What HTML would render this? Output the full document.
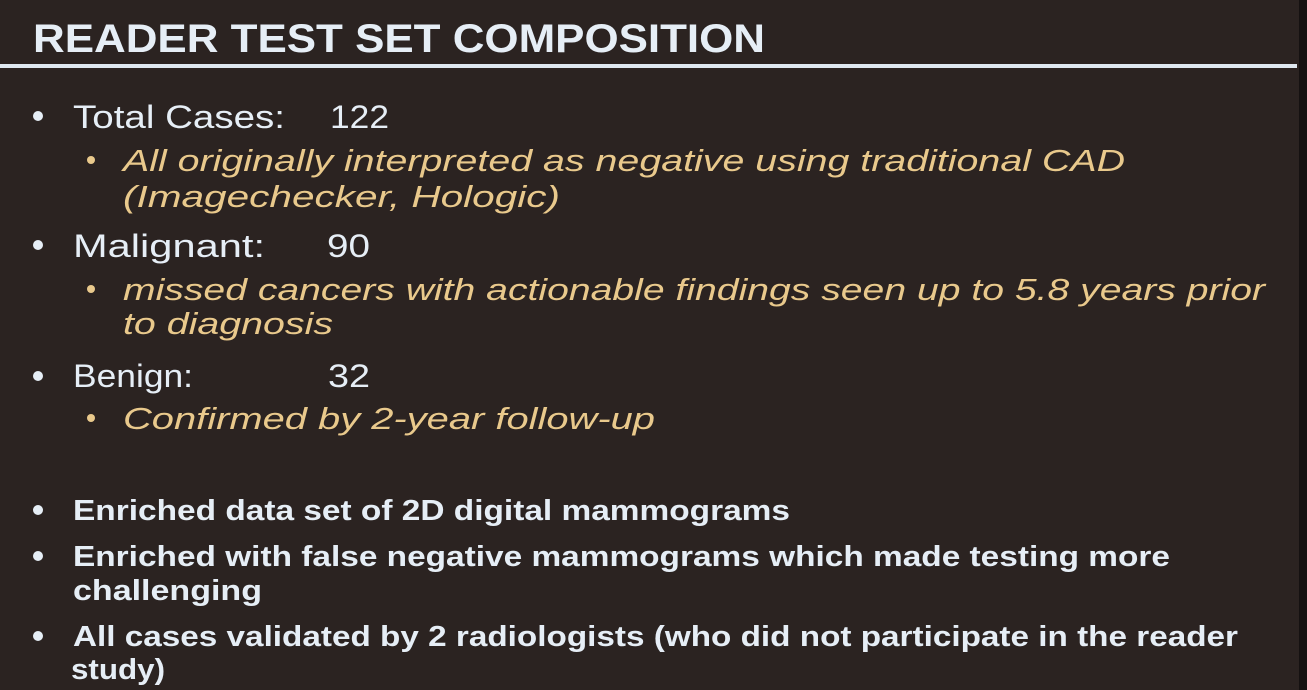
<!DOCTYPE html>
<html><head><meta charset="utf-8"><style>
html,body{margin:0;padding:0;background:#2a2220;}
svg{display:block}
.w{fill:#e6eef6;font-family:"Liberation Sans",sans-serif;}
.g{fill:#e9c98c;font-family:"Liberation Sans",sans-serif;font-style:italic;}
</style></head><body>
<svg width="1307" height="690" viewBox="0 0 1307 690" xmlns="http://www.w3.org/2000/svg">
<rect width="1307" height="690" fill="#2b2321"/>
<rect x="1299" y="0" width="8" height="690" fill="#151111"/>
<text class="w" x="33" y="52" font-size="40" font-weight="bold" textLength="732" lengthAdjust="spacingAndGlyphs">READER TEST SET COMPOSITION</text>
<rect x="0" y="64" width="1297" height="4" fill="#dfe8f0"/>
<g fill="#e6eef6">
<circle cx="38" cy="116" r="5"/><circle cx="38" cy="245" r="5"/><circle cx="38" cy="376" r="5"/>
<circle cx="38" cy="510" r="5"/><circle cx="38" cy="556" r="5"/><circle cx="38" cy="636" r="5"/>
</g>
<g fill="#e9c98c"><circle cx="91" cy="160" r="4"/><circle cx="91" cy="289" r="4"/><circle cx="91" cy="418" r="4"/></g>
<text class="w" x="73" y="128" font-size="32" textLength="212" lengthAdjust="spacingAndGlyphs">Total Cases:</text>
<text class="w" x="330" y="128" font-size="32" textLength="59" lengthAdjust="spacingAndGlyphs">122</text>
<text class="g" x="123" y="171" font-size="31" textLength="1002" lengthAdjust="spacingAndGlyphs">All originally interpreted as negative using traditional CAD</text>
<text class="g" x="123" y="207" font-size="31" textLength="437" lengthAdjust="spacingAndGlyphs">(Imagechecker, Hologic)</text>
<text class="w" x="73" y="257" font-size="32" textLength="192" lengthAdjust="spacingAndGlyphs">Malignant:</text>
<text class="w" x="327" y="257" font-size="32" textLength="43" lengthAdjust="spacingAndGlyphs">90</text>
<text class="g" x="123" y="300" font-size="31" textLength="1142" lengthAdjust="spacingAndGlyphs">missed cancers with actionable findings seen up to 5.8 years prior</text>
<text class="g" x="123" y="334" font-size="31" textLength="210" lengthAdjust="spacingAndGlyphs">to diagnosis</text>
<text class="w" x="73" y="387" font-size="32" textLength="120" lengthAdjust="spacingAndGlyphs">Benign:</text>
<text class="w" x="328" y="387" font-size="32" textLength="42" lengthAdjust="spacingAndGlyphs">32</text>
<text class="g" x="123" y="429" font-size="31" textLength="532" lengthAdjust="spacingAndGlyphs">Confirmed by 2-year follow-up</text>
<text class="w" x="73" y="520" font-size="29" font-weight="bold" textLength="717" lengthAdjust="spacingAndGlyphs">Enriched data set of 2D digital mammograms</text>
<text class="w" x="73" y="566" font-size="29" font-weight="bold" textLength="1097" lengthAdjust="spacingAndGlyphs">Enriched with false negative mammograms which made testing more</text>
<text class="w" x="73" y="600" font-size="29" font-weight="bold" textLength="189" lengthAdjust="spacingAndGlyphs">challenging</text>
<text class="w" x="73" y="646" font-size="29" font-weight="bold" textLength="1165" lengthAdjust="spacingAndGlyphs">All cases validated by 2 radiologists (who did not participate in the reader</text>
<text class="w" x="71" y="679" font-size="29" font-weight="bold" textLength="94" lengthAdjust="spacingAndGlyphs">study)</text>
</svg>
</body></html>
